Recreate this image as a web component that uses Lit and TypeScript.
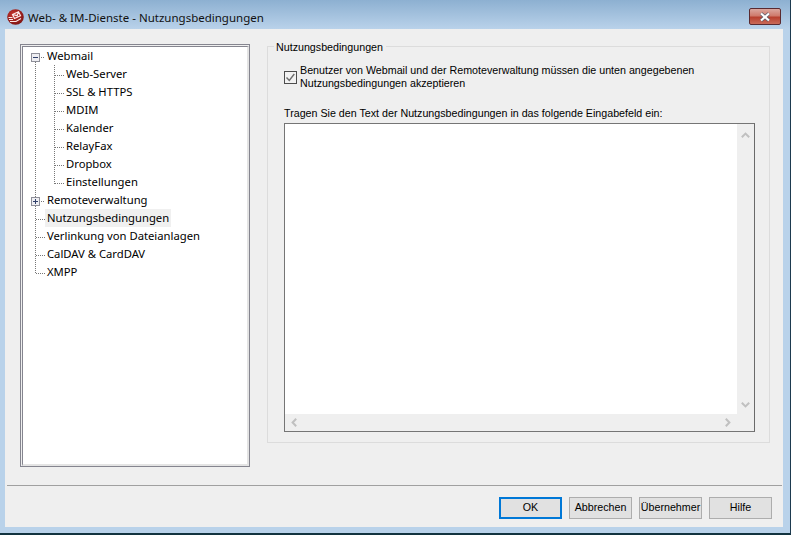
import { LitElement, html, css, svg } from 'lit';
import { customElement } from 'lit/decorators.js';

interface TreeItem {
  label: string;
  level: number;
  selected?: boolean;
  expander?: 'open' | 'closed';
}

const TREE: TreeItem[] = [
  { label: 'Webmail', level: 0, expander: 'open' },
  { label: 'Web-Server', level: 1 },
  { label: 'SSL & HTTPS', level: 1 },
  { label: 'MDIM', level: 1 },
  { label: 'Kalender', level: 1 },
  { label: 'RelayFax', level: 1 },
  { label: 'Dropbox', level: 1 },
  { label: 'Einstellungen', level: 1 },
  { label: 'Remoteverwaltung', level: 0, expander: 'closed' },
  { label: 'Nutzungsbedingungen', level: 0, selected: true },
  { label: 'Verlinkung von Dateianlagen', level: 0 },
  { label: 'CalDAV & CardDAV', level: 0 },
  { label: 'XMPP', level: 0 },
];

const BUTTONS = ['OK', 'Abbrechen', 'Übernehmer', 'Hilfe'];

@customElement('app-root')
export class AppRoot extends LitElement {
  private renderGuides() {
    // tree connector lines, coordinates relative to the list box
    const lines: [number, number, number, number][] = [
      [12.5, 15, 12.5, 227],
      [31.5, 18, 31.5, 137],
    ];
    TREE.forEach((item, i) => {
      const y = 10.5 + i * 18;
      if (item.level === 1) lines.push([32, y, 41, y]);
      else if (item.expander) lines.push([18, y, 22, y]);
      else lines.push([13, y, 22, y]);
    });
    return html`<svg class="guides" width="226" height="240">
      ${lines.map(
        ([x1, y1, x2, y2]) =>
          svg`<line x1=${x1} y1=${y1} x2=${x2} y2=${y2} stroke="#777" stroke-dasharray="1 1" />`
      )}
    </svg>`;
  }

  private renderExpander(kind: 'open' | 'closed', top: number) {
    return html`<svg class="expander" style="top:${top}px" width="9" height="9" viewBox="0 0 9 9">
      <rect x="0.5" y="0.5" width="8" height="8" fill="#eeeef2" stroke="#8e8f99" />
      <path d="M2 4.5h5" stroke="#30406a" />
      ${kind === 'closed' ? svg`<path d="M4.5 2v5" stroke="#30406a" />` : ''}
    </svg>`;
  }

  override render() {
    return html`
      <div class="frame">
        <header class="titlebar">
          <svg class="logo" width="17" height="16" viewBox="0 0 17 16">
            <defs>
              <radialGradient id="logo-fill" cx="0.4" cy="0.35" r="0.7">
                <stop offset="0" stop-color="#c8362f" />
                <stop offset="1" stop-color="#7d1413" />
              </radialGradient>
            </defs>
            <ellipse cx="8.5" cy="8" rx="8.3" ry="7.8" fill="url(#logo-fill)" />
            <path d="M5.5 5.5l6-2.8 2 4-6 2.8zM5.5 5.5l4.7 1.2 1.3-4" fill="none" stroke="#fbe9e9" stroke-width="1.2" />
            <path d="M1.5 8.5h4M2 10.5h4M3 12.5h6l5-3" fill="none" stroke="#fbe9e9" stroke-width="1.1" />
          </svg>
          <span class="title">Web- &amp; IM-Dienste - Nutzungsbedingungen</span>
          <div class="close">
            <svg width="14" height="10" viewBox="0 0 14 10">
              <path d="M3 1.5l8 7M11 1.5l-8 7" stroke="#5a5f70" stroke-width="3.6" />
              <path d="M3 1.5l8 7M11 1.5l-8 7" stroke="#fff" stroke-width="2.2" />
            </svg>
          </div>
        </header>
        <main class="client">
          <div class="content">
            <nav class="tree">
              <div class="tree-inner">
                ${this.renderGuides()}
                ${TREE.map((item, i) => html`
                  ${item.expander ? this.renderExpander(item.expander, 6 + i * 18) : ''}
                  <div class="row ${item.level === 1 ? 'child' : ''}">
                    <span class="label ${item.selected ? 'selected' : ''}">${item.label}</span>
                  </div>
                `)}
              </div>
            </nav>
            <section class="group">
              <span class="legend">Nutzungsbedingungen</span>
              <label class="check">
                <span class="box">
                  <svg width="11" height="11" viewBox="0 0 11 11">
                    <path d="M1.5 5.5l2.8 3 5-6.5" fill="none" stroke="#6d6d6d" stroke-width="1.4" />
                  </svg>
                </span>
                <span>Benutzer von Webmail und der Remoteverwaltung müssen die unten angegebenen<br />Nutzungsbedingungen akzeptieren</span>
              </label>
              <div class="prompt">Tragen Sie den Text der Nutzungsbedingungen in das folgende Eingabefeld ein:</div>
              <div class="textbox">
                <div class="text-main">
                  <div class="editor"></div>
                  <div class="vbar">
                    <svg width="9" height="6" viewBox="0 0 9 6"><path d="M0.8 5.2l3.7-3.6 3.7 3.6" fill="none" stroke="#c0c0c0" stroke-width="2" /></svg>
                    <svg width="9" height="6" viewBox="0 0 9 6"><path d="M0.8 0.8l3.7 3.6 3.7-3.6" fill="none" stroke="#c0c0c0" stroke-width="2" /></svg>
                  </div>
                </div>
                <div class="hbar">
                  <svg width="6" height="9" viewBox="0 0 6 9"><path d="M5.2 0.8L1.6 4.5l3.6 3.7" fill="none" stroke="#c0c0c0" stroke-width="2" /></svg>
                  <svg width="6" height="9" viewBox="0 0 6 9"><path d="M0.8 0.8l3.6 3.7-3.6 3.7" fill="none" stroke="#c0c0c0" stroke-width="2" /></svg>
                </div>
              </div>
            </section>
          </div>
          <footer class="footer">
            ${BUTTONS.map((b, i) => html`<button class=${i === 0 ? 'default' : ''}>${b}</button>`)}
          </footer>
        </main>
      </div>
    `;
  }

  static override styles = css`
    :host {
      display: block;
      width: 791px;
      height: 535px;
      font-family: 'Liberation Sans', Arial, sans-serif;
      font-size: 10.7px;
      color: #000;
    }
    .frame {
      box-sizing: border-box;
      width: 791px;
      height: 535px;
      display: flex;
      flex-direction: column;
      padding: 0 7px 6px 5px;
      background: linear-gradient(#8db0d1 0, #b9d2ea 29px);
      border-right: 1px solid #1d3a4f;
      border-bottom: 2px solid #12333f;
    }
    .titlebar {
      height: 29px;
      flex: none;
      display: flex;
      align-items: center;
      gap: 4px;
      padding: 5px 0 0 2px;
      box-sizing: border-box;
    }
    .title {
      font-family: 'Noto Sans', sans-serif;
      font-size: 11.5px;
      color: #111;
    }
    .close {
      margin-left: auto;
      margin-right: 2px;
      margin-top: -1px;
      width: 32px;
      height: 17px;
      box-sizing: border-box;
      display: flex;
      align-items: center;
      justify-content: center;
      border: 1px solid #5a2a30;
      border-radius: 2px;
      background: linear-gradient(#dba79f 0, #cf7a6c 45%, #b8402f 55%, #c96a58 100%);
    }
    .client {
      flex: 1;
      display: flex;
      flex-direction: column;
      background: #efefef;
      min-height: 0;
    }
    .content {
      flex: 1;
      display: flex;
      align-items: flex-start;
      padding: 15px 13px 0 15px;
      gap: 17px;
      min-height: 0;
    }
    .tree {
      box-sizing: border-box;
      width: 230px;
      height: 423px;
      flex: none;
      border: 1px solid #85858f;
      background: #efefef;
      padding-left: 1px;
      padding-top: 1px;
      font-family: 'Noto Sans', sans-serif;
      font-size: 11.25px;
    }
    .tree-inner {
      position: relative;
      box-sizing: border-box;
      height: 100%;
      border-left: 1px solid #85858f;
      border-top: 1px solid #85858f;
      background: #fff;
      border-right: 2px solid #e4e4e4;
      border-bottom: 2px solid #e4e4e4;
    }
    .guides {
      position: absolute;
      left: 0;
      top: 0;
    }
    .expander {
      position: absolute;
      left: 8px;
    }
    .row {
      height: 18px;
      padding-left: 22px;
      display: flex;
      align-items: center;
    }
    .row.child {
      padding-left: 41px;
    }
    .label {
      padding: 0 2px;
      line-height: 18px;
      white-space: nowrap;
      position: relative;
    }
    .label.selected {
      background: #f0f0f0;
    }
    .group {
      position: relative;
      box-sizing: border-box;
      width: 503px;
      height: 397px;
      margin-top: 2px;
      border: 1px solid #dcdcdc;
      padding: 17px 14px 10px 16px;
      display: flex;
      flex-direction: column;
    }
    .legend {
      position: absolute;
      left: 6px;
      top: -8px;
      padding: 0 3px 0 2px;
      background: #efefef;
      line-height: 16px;
    }
    .check {
      display: flex;
      align-items: center;
      line-height: 13px;
      gap: 3px;
      white-space: nowrap;
    }
    .box {
      box-sizing: border-box;
      width: 13px;
      height: 13px;
      flex: none;
      border: 1px solid #4d4d4d;
      background: #f2f2f2;
      display: flex;
    }
    .prompt {
      margin-top: 15px;
      line-height: 16px;
    }
    .textbox {
      flex: 1;
      margin-top: 2px;
      border: 1px solid #757575;
      border-right-color: #6a6a6a;
      display: flex;
      flex-direction: column;
      min-height: 0;
    }
    .text-main {
      flex: 1;
      display: flex;
      min-height: 0;
    }
    .editor {
      flex: 1;
      background: #fff;
    }
    .vbar {
      width: 17px;
      display: flex;
      flex-direction: column;
      justify-content: space-between;
      align-items: center;
      padding: 8px 0 6px;
      box-sizing: border-box;
    }
    .hbar {
      height: 17px;
      flex: none;
      display: flex;
      justify-content: space-between;
      align-items: center;
      padding: 0 23px 0 6px;
    }
    .footer {
      flex: none;
      height: 42px;
      margin: 0 1px 0 2px;
      border-top: 1px solid #a0a0a0;
      display: flex;
      justify-content: flex-end;
      gap: 7px;
      padding: 11px 10px 0 0;
      box-sizing: border-box;
    }
    button {
      box-sizing: border-box;
      width: 63px;
      height: 22px;
      padding: 0 0 2px;
      font: inherit;
      color: #000;
      background: #e1e1e1;
      border: 1px solid #adadad;
    }
    button.default {
      border: 2px solid #0078d7;
    }
  `;
}

declare global {
  interface HTMLElementTagNameMap {
    'app-root': AppRoot;
  }
}
